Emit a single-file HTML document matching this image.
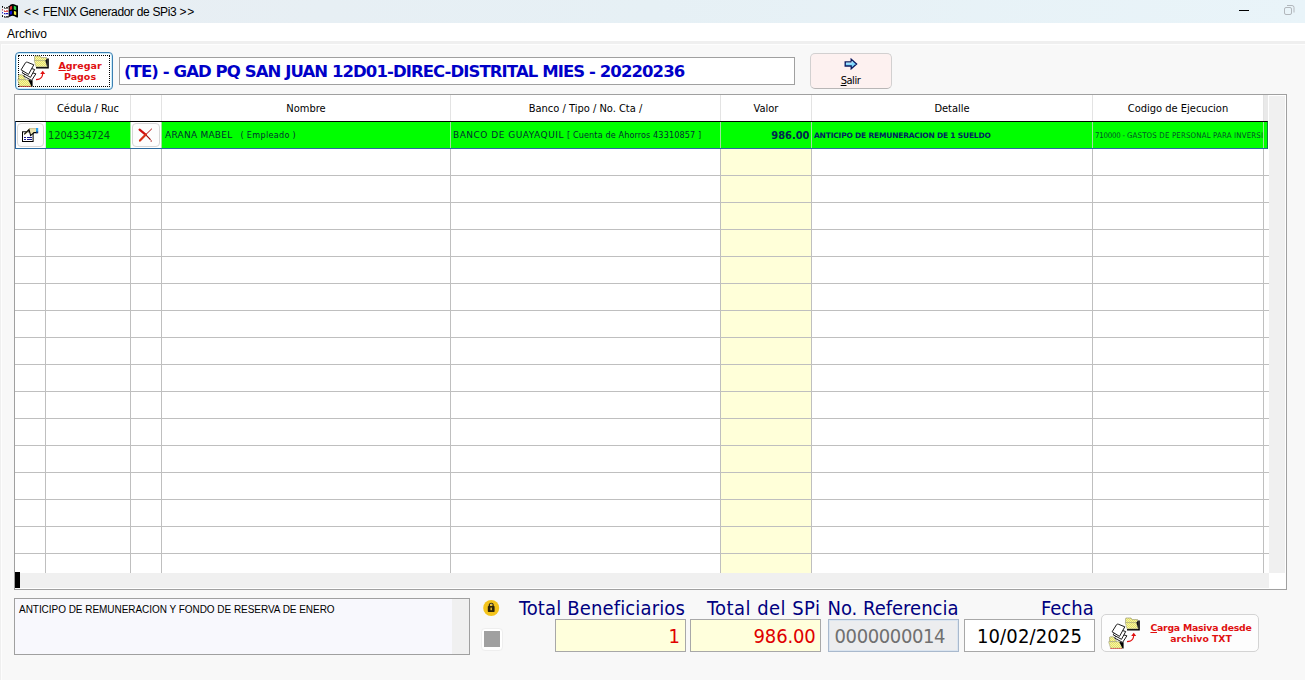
<!DOCTYPE html>
<html lang="es">
<head>
<meta charset="utf-8">
<title>FENIX Generador de SPi3</title>
<style>
*{box-sizing:border-box;margin:0;padding:0}
html,body{width:1305px;height:680px;overflow:hidden;background:#f8f8f8}
body{position:relative;font-family:"Liberation Sans",sans-serif;color:#000}
.abs{position:absolute}
.t{position:absolute;white-space:pre;line-height:1}
#titlebar{left:0;top:0;width:1305px;height:23px;background:linear-gradient(90deg,#e8eef3 0%,#e6f0f5 50%,#e9f4f9 100%)}
#menubar{left:0;top:23px;width:1305px;height:18px;background:#fff}
#sep1{left:0;top:41px;width:1305px;height:3px;background:#efefef}
#sep2{left:1px;top:44px;width:1304px;height:1px;background:#fdfdfd}
#lb1{left:0;top:41px;width:1px;height:639px;background:#efefef}
#lb2{left:1px;top:44px;width:1px;height:636px;background:#fdfdfd}
.tah{font-family:"DejaVu Sans Condensed","Liberation Sans",sans-serif}
.ver{font-family:"DejaVu Sans","Liberation Sans",sans-serif}
/* grid */
#grid{left:14px;top:94px;width:1273px;height:496px;background:#fff;border:1px solid #a0a0a0}
.vl{position:absolute;width:1px;background:#c0c0c0;top:95px;height:478px}
.hl{position:absolute;height:1px;background:#c0c0c0;left:15px;width:1254px}
.hd{position:absolute;top:102px;font-size:11px;white-space:pre;line-height:13px;text-align:center}
</style>
</head>
<body>
<div id="titlebar" class="abs"></div>
<div id="menubar" class="abs"></div>
<div id="sep1" class="abs"></div>
<div id="sep2" class="abs"></div>
<div id="lb1" class="abs"></div>
<div id="lb2" class="abs"></div>

<!-- app icon -->
<svg class="abs" style="left:0;top:0" width="22" height="22" viewBox="0 0 22 22">
  <path d="M8.1 6.6 Q9.6 6 10.6 4.6 Q12.8 3.4 14.8 4.4 Q16.4 5.4 18 5.4 V17.6 Q16.2 17.6 14.6 16.2 Q12.8 15.2 11.2 16 Q9.8 17 8.1 17 Z" fill="#000"/>
  <path d="M9.7 6.8 Q11 6.4 12.1 5.8 V9.2 Q11 9.8 9.7 10 Z" fill="#e02a2a"/>
  <path d="M13.8 5.8 Q15 6.2 16.2 6.8 V10.2 Q15 9.6 13.8 9.4 Z" fill="#2fd64a"/>
  <path d="M9.7 11.4 Q11 11.2 12.1 10.8 V14.2 Q11 14.6 9.7 14.8 Z" fill="#1010d8"/>
  <path d="M13.9 11 Q15 11.2 16.2 11.8 V15.2 Q15 14.6 13.9 14.4 Z" fill="#f4ee3a"/>
  <rect x="3.6" y="7" width="5" height="10.6" fill="#fff"/>
  <rect x="1.8" y="7.6" width="1.4" height="7.6" fill="#f4f6fa"/>
  <rect x="2" y="6" width="1" height="1.7" fill="#000"/>
  <rect x="2" y="9.2" width="1" height="1.3" fill="#b03030"/>
  <rect x="2" y="12.1" width="1" height="1.3" fill="#2020c0"/>
  <rect x="2" y="15.2" width="1" height="1.7" fill="#000"/>
  <path d="M4 7.2 H5 V8 H6 V7.2 H8.2 V8.5 H4 Z" fill="#000"/>
  <path d="M4 10.4 H5 V11 H6 V10.4 H8.2 V11.7 H4 Z" fill="#d01818"/>
  <path d="M4 13 H5 V13.6 H6 V13 H8.2 V14.3 H4 Z" fill="#1818b8"/>
  <path d="M4 16.2 H5 V16.8 H6 V16.2 H8.8 V17.6 H4 Z" fill="#000"/>
</svg>
<div class="t" style="left:24px;top:6px;font-size:12px;letter-spacing:-0.34px"><span style="letter-spacing:0.9px">&lt;&lt;</span> FENIX Generador de SPi3 <span style="letter-spacing:0.9px">&gt;&gt;</span></div>
<div class="t" style="left:7px;top:28px;font-size:12px">Archivo</div>

<!-- window controls -->
<div class="abs" style="left:1239px;top:10px;width:10px;height:1px;background:#000"></div>
<svg class="abs" style="left:1283px;top:4px" width="13" height="13" viewBox="0 0 13 13" fill="none" stroke="#b2b7bc" stroke-width="1">
  <rect x="1.5" y="3.5" width="7" height="7" rx="1.5"/>
  <path d="M4 1.5 H9 Q11 1.5 11 3.5 V8.5"/>
</svg>

<!-- Agregar Pagos button -->
<div class="abs" style="left:15px;top:52px;width:98px;height:38px;border:1px solid #3c7fb1;border-radius:4px;background:#fff;box-shadow:inset 0 0 0 1px #c9ecfa"></div>
<div class="abs" style="left:18px;top:55px;width:92px;height:32px;border:1px dotted #000"></div>
<div class="t ver" style="left:50px;top:60px;width:60px;text-align:center;font-size:9.5px;font-weight:bold;color:#e01010;line-height:11px"><u>A</u>gregar
Pagos</div>

<svg class="abs" style="left:17px;top:55px" width="32" height="32" viewBox="0 0 32 32">
  <defs><pattern id="dithA" width="2" height="2" patternUnits="userSpaceOnUse"><rect width="2" height="2" fill="#e6e264"/><rect width="1" height="1" fill="#f6f4a8"/><rect x="1" y="1" width="1" height="1" fill="#f6f4a8"/></pattern></defs>
  <!-- top folder -->
  <path d="M19 13.5 H31.8 V3.5 H30.2 V11.8 H19 Z" fill="#000"/>
  <path d="M17.6 3 V1.6 Q17.6 1 18.3 1 H23 L24.2 2.6 H29.6 V6 H17.6 Z" fill="url(#dithA)" stroke="#8a8a6a" stroke-width="0.6"/>
  <path d="M17.2 5.6 H28.4 L30.2 11.8 H19 Z" fill="url(#dithA)" stroke="#9a9a80" stroke-width="0.5"/>
  <path d="M28.4 5.6 L30.2 11.8 V3.6 Z" fill="#111"/>
  <!-- papers -->
  <path d="M11 16.5 L18.9 18.8 L14.6 25.4 L6.3 20.9 Z" fill="#fff" stroke="#000" stroke-width="0.9" stroke-linejoin="round"/>
  <path d="M9.6 12 L17.7 14.5 L13.5 22.3 L5.2 17.8 Z" fill="#fff" stroke="#000" stroke-width="0.9" stroke-linejoin="round"/>
  <path d="M8.5 7.7 Q9.5 6.8 10.6 7.3 L16.8 9.8 L11.5 19.4 L4.1 14.8 Z" fill="#fff" stroke="#000" stroke-width="0.9" stroke-linejoin="round"/>
  <!-- bottom folder -->
  <path d="M1.6 24.8 V20.6 Q1.6 19.8 2.4 19.8 H5.4 L6.6 21.6 L9 24.8 Z" fill="url(#dithA)" stroke="#8a8a6a" stroke-width="0.6"/>
  <path d="M0.6 24.7 H11.2 L14.6 31.2 H2.6 Z" fill="url(#dithA)" stroke="#9a9a80" stroke-width="0.5"/>
  <path d="M11.2 24.7 L14.6 31.4 H15.6 V25 L14.6 25.4 Z" fill="#000"/>
  <path d="M2.6 31.5 H14" stroke="#d01010" stroke-width="1" stroke-dasharray="1 1"/>
  <!-- arrow -->
  <path d="M19 24.6 Q23.2 24.4 24.6 22.2 Q25.6 20.6 25.7 18.6" fill="none" stroke="#e01010" stroke-width="1.1"/>
  <path d="M23.2 19 L25.7 15.8 L28.2 19 Z" fill="#e01010"/>
</svg>
<!-- title textbox -->
<div class="abs" style="left:119px;top:57px;width:676px;height:28px;border:1px solid #a0a0a0;background:#fff"></div>
<div class="t ver" style="left:124px;top:63.5px;font-size:16.5px;font-weight:bold;color:#0000c8;letter-spacing:-0.92px">(TE) - GAD PQ SAN JUAN 12D01-DIREC-DISTRITAL MIES - 20220236</div>

<!-- Salir button -->
<div class="abs" style="left:810px;top:53px;width:82px;height:36px;border:1px solid #d2d0d0;border-bottom-color:#b8b6b6;border-radius:5px;background:#fdf1f0"></div>
<div class="t tah" style="left:809.5px;top:74.6px;width:82px;text-align:center;font-size:11px;letter-spacing:-0.45px"><u>S</u>alir</div>

<svg class="abs" style="left:844px;top:58px" width="14" height="12" viewBox="0 0 14 12">
  <path d="M1.2 4 H7.2 V1.2 L12.6 6 L7.2 10.8 V8 H1.2 Z" fill="#7fd8ff" stroke="#0a1a60" stroke-width="1.3" stroke-linejoin="miter"/>
  <path d="M2 5 H8 V3.2" fill="none" stroke="#d8f4ff" stroke-width="0.8"/>
</svg>
<!-- grid -->
<div id="grid" class="abs"></div>

<div class="abs" style="left:1264px;top:95px;width:4px;height:26px;background:#e9e9e9"></div>
<div class="abs" style="left:721px;top:149px;width:90px;height:424px;background:#ffffd9"></div>
<div class="abs" style="left:45px;top:95px;width:1px;height:26px;background:#e3e3e3"></div>
<div class="abs" style="left:45px;top:149px;width:1px;height:424px;background:#bfbfbf"></div>
<div class="abs" style="left:130px;top:95px;width:1px;height:26px;background:#e3e3e3"></div>
<div class="abs" style="left:130px;top:149px;width:1px;height:424px;background:#bfbfbf"></div>
<div class="abs" style="left:161px;top:95px;width:1px;height:26px;background:#e3e3e3"></div>
<div class="abs" style="left:161px;top:149px;width:1px;height:424px;background:#bfbfbf"></div>
<div class="abs" style="left:450px;top:95px;width:1px;height:26px;background:#e3e3e3"></div>
<div class="abs" style="left:450px;top:149px;width:1px;height:424px;background:#bfbfbf"></div>
<div class="abs" style="left:720px;top:95px;width:1px;height:26px;background:#e3e3e3"></div>
<div class="abs" style="left:720px;top:149px;width:1px;height:424px;background:#bfbfbf"></div>
<div class="abs" style="left:811px;top:95px;width:1px;height:26px;background:#e3e3e3"></div>
<div class="abs" style="left:811px;top:149px;width:1px;height:424px;background:#bfbfbf"></div>
<div class="abs" style="left:1092px;top:95px;width:1px;height:26px;background:#e3e3e3"></div>
<div class="abs" style="left:1092px;top:149px;width:1px;height:424px;background:#bfbfbf"></div>
<div class="abs" style="left:1263px;top:95px;width:1px;height:26px;background:#e3e3e3"></div>
<div class="abs" style="left:1263px;top:149px;width:1px;height:424px;background:#bfbfbf"></div>
<div class="abs" style="left:15px;top:175px;width:1254px;height:1px;background:#bfbfbf"></div>
<div class="abs" style="left:15px;top:202px;width:1254px;height:1px;background:#bfbfbf"></div>
<div class="abs" style="left:15px;top:229px;width:1254px;height:1px;background:#bfbfbf"></div>
<div class="abs" style="left:15px;top:256px;width:1254px;height:1px;background:#bfbfbf"></div>
<div class="abs" style="left:15px;top:283px;width:1254px;height:1px;background:#bfbfbf"></div>
<div class="abs" style="left:15px;top:310px;width:1254px;height:1px;background:#bfbfbf"></div>
<div class="abs" style="left:15px;top:337px;width:1254px;height:1px;background:#bfbfbf"></div>
<div class="abs" style="left:15px;top:364px;width:1254px;height:1px;background:#bfbfbf"></div>
<div class="abs" style="left:15px;top:391px;width:1254px;height:1px;background:#bfbfbf"></div>
<div class="abs" style="left:15px;top:418px;width:1254px;height:1px;background:#bfbfbf"></div>
<div class="abs" style="left:15px;top:445px;width:1254px;height:1px;background:#bfbfbf"></div>
<div class="abs" style="left:15px;top:472px;width:1254px;height:1px;background:#bfbfbf"></div>
<div class="abs" style="left:15px;top:499px;width:1254px;height:1px;background:#bfbfbf"></div>
<div class="abs" style="left:15px;top:526px;width:1254px;height:1px;background:#bfbfbf"></div>
<div class="abs" style="left:15px;top:553px;width:1254px;height:1px;background:#bfbfbf"></div>
<div class="abs" style="left:1269px;top:96px;width:16px;height:477px;background:#f0f0f0"></div>
<div class="abs" style="left:15px;top:573px;width:1254px;height:15px;background:#f0f0f0"></div>
<div class="abs" style="left:15px;top:572px;width:5px;height:16px;background:#000"></div>
<div class="abs" style="left:15px;top:121px;width:1253px;height:28px;background:#00ff00;border-top:1px solid #000;border-left:1px solid #2a62a0;border-bottom:1px solid #2a6aa0;border-right:1px solid #108040"></div>
<div class="abs" style="left:16px;top:122px;width:30px;height:26px;background:#fff"></div>
<div class="abs" style="left:131px;top:122px;width:31px;height:26px;background:#fff"></div>
<div class="abs" style="left:130px;top:122px;width:1px;height:26px;background:#9ce49c"></div>
<div class="abs" style="left:161px;top:122px;width:1px;height:26px;background:#9ce49c"></div>
<div class="abs" style="left:450px;top:122px;width:1px;height:26px;background:#9ce49c"></div>
<div class="abs" style="left:720px;top:122px;width:1px;height:26px;background:#9ce49c"></div>
<div class="abs" style="left:811px;top:122px;width:1px;height:26px;background:#9ce49c"></div>
<div class="abs" style="left:1092px;top:122px;width:1px;height:26px;background:#9ce49c"></div>
<div class="abs" style="left:1263px;top:122px;width:1px;height:26px;background:#9ce49c"></div>
<div class="abs" style="left:45px;top:122px;width:1px;height:26px;background:#d8e4f0"></div>
<div class="abs" style="left:17px;top:123px;width:27px;height:24px;background:#fdfdfd;border:1px solid #d6d6d6;border-radius:4px"></div>
<div class="abs" style="left:132px;top:123px;width:28px;height:24px;background:#fdfdfd;border:1px solid #d6d6d6;border-radius:4px"></div>
<svg class="abs" style="left:21px;top:127px" width="18" height="16" viewBox="0 0 18 16">
  <rect x="1.5" y="4.8" width="10.6" height="9.7" fill="#fff" stroke="#000" stroke-width="1"/>
  <rect x="3" y="10" width="2" height="1" fill="#1a1a90"/><rect x="6" y="10" width="5" height="1" fill="#1a1a90"/>
  <rect x="3" y="12" width="2" height="1" fill="#1a1a90"/><rect x="6" y="12" width="5" height="1" fill="#1a1a90"/>
  <path d="M3 7.2 L8 1.4 H15 V5.4 L13 5.4 L9.6 8.6 L8 3.6 L5 7.6 Z" fill="#ece4b0"/>
  <path d="M8 1.6 H15" stroke="#cfc490" stroke-width="1"/>
  <path d="M3.2 7.4 L8 2.6 L9.6 8.6 L13 5.6 L16.6 5.6" fill="none" stroke="#000" stroke-width="1.1"/>
  <rect x="15" y="1" width="2.2" height="4" fill="#2aa0f0"/>
  <rect x="15" y="4.6" width="2.2" height="1.6" fill="#103080"/>
</svg>
<svg class="abs" style="left:138px;top:128px" width="16" height="15" viewBox="0 0 16 15">
  <path d="M1.6 1.6 L7.6 6.6" stroke="#d01010" stroke-width="2.2" stroke-linecap="round"/>
  <path d="M7.6 6.6 L12.2 11.4" stroke="#a00c0c" stroke-width="1.2" stroke-linecap="round"/>
  <path d="M13.6 1 L7.8 6.6" stroke="#b01010" stroke-width="1" stroke-linecap="round"/>
  <path d="M7.8 6.6 L2 12.6" stroke="#d83018" stroke-width="2.2" stroke-linecap="round"/>
  <rect x="12.6" y="12.4" width="1.2" height="1.2" fill="#a01010"/>
</svg>
<div class="hd tah" style="left:46px;width:84px">Cédula / Ruc</div>
<div class="hd tah" style="left:162px;width:288px">Nombre</div>
<div class="hd tah" style="left:451px;width:269px">Banco / Tipo / No. Cta /</div>
<div class="hd tah" style="left:721px;width:90px">Valor</div>
<div class="hd tah" style="left:812px;width:280px">Detalle</div>
<div class="hd tah" style="left:1093px;width:170px">Codigo de Ejecucion</div>
<div class="t tah" style="left:48px;top:130px;font-size:11px;color:#00521c;letter-spacing:-0.1px">1204334724</div>
<div class="t ver" style="left:165px;top:131px;font-size:9px;color:#003030;letter-spacing:0.24px">ARANA MABEL</div>
<div class="t tah" style="left:240.5px;top:131px;font-size:9px;color:#003030;letter-spacing:0.3px">( Empleado )</div>
<div class="t ver" style="left:453px;top:131px;font-size:9px;color:#003030;letter-spacing:0.5px">BANCO DE GUAYAQUIL</div>
<div class="t tah" style="left:567px;top:131px;font-size:9px;color:#003030;letter-spacing:0.12px">[ Cuenta de Ahorros 43310857 ]</div>
<div class="t tah" style="left:721px;width:88.5px;text-align:right;top:130px;font-size:11px;font-weight:bold;color:#002850">986.00</div>
<div class="t ver" style="left:814px;top:132px;font-size:7.5px;font-weight:bold;color:#002460;letter-spacing:-0.19px">ANTICIPO DE REMUNERACION DE 1 SUELDO</div>
<div class="t tah" style="left:1095px;top:132px;font-size:7.8px;color:#005028;width:168px;overflow:hidden;letter-spacing:0.17px"><span style="letter-spacing:-0.2px">710000 - </span>GASTOS DE PERSONAL PARA INVERSI</div>
<div class="abs" style="left:14px;top:598px;width:456px;height:57px;background:#f8f8fd;border:1px solid #a0a0a0"></div>
<div class="abs" style="left:452px;top:599px;width:17px;height:55px;background:#f0f0f0"></div>
<div class="t" style="left:19px;top:605px;font-size:10px;letter-spacing:-0.04px;color:#000">ANTICIPO DE REMUNERACION Y FONDO DE RESERVA DE ENERO</div>
<svg class="abs" style="left:483px;top:600px" width="17" height="17" viewBox="0 0 17 17"><circle cx="8.2" cy="8" r="8" fill="#f4c41c"/><rect x="4.8" y="6" width="6.8" height="6" rx="0.7" fill="#2e2408"/><path d="M6.3 6.4 V5.4 A1.9 1.9 0 0 1 10.1 5.4 V6.4" fill="none" stroke="#2e2408" stroke-width="1.3"/><rect x="7.5" y="7.6" width="1.4" height="2.6" fill="#e8c040"/><path d="M6.9 4.6 Q8.2 3.6 9.5 4.6" stroke="#fff6d0" stroke-width="0.7" fill="none"/></svg>
<div class="abs" style="left:481px;top:628px;width:22px;height:23px;background:#fff;border:1px solid #eeeeee;border-radius:4px"></div>
<div class="abs" style="left:484px;top:631px;width:16px;height:16px;background:#a0a0a0"></div>
<div class="t tah" style="left:519px;top:598px;font-size:20px;color:#000080;letter-spacing:0.14px">Total Beneficiarios</div>
<div class="t tah" style="left:707px;top:598px;font-size:20px;color:#000080;letter-spacing:0.46px">Total del SPi</div>
<div class="t tah" style="left:827.5px;top:598px;font-size:20px;color:#000080">No. Referencia</div>
<div class="t tah" style="left:1041px;top:598px;font-size:20px;color:#000080">Fecha</div>
<div class="abs" style="left:555px;top:619px;width:131px;height:33px;background:#ffffdc;border:1px solid #a8a8a8"></div>
<div class="abs" style="left:690px;top:619px;width:131px;height:33px;background:#ffffdc;border:1px solid #a8a8a8"></div>
<div class="abs" style="left:828px;top:619px;width:131px;height:33px;background:#ecedef;border:1px solid #a9b9cd;box-shadow:inset 0 0 0 1px #dbe5f0"></div>
<div class="abs" style="left:964px;top:619px;width:131px;height:33px;background:#fff;border:1px solid #a8a8a8"></div>
<div class="t tah" style="left:556px;width:124px;text-align:right;top:626px;font-size:20px;color:#e00000">1</div>
<div class="t tah" style="left:691px;width:124.6px;text-align:right;top:626px;font-size:20px;color:#e00000;letter-spacing:-0.15px">986.00</div>
<div class="t tah" style="left:834.5px;top:626px;font-size:20px;color:#707070;letter-spacing:-0.38px">0000000014</div>
<div class="t tah" style="left:964px;width:131px;text-align:center;top:626px;font-size:20px;color:#000;letter-spacing:0.15px">10/02/2025</div>
<div class="abs" style="left:1101px;top:614px;width:158px;height:38px;background:#fdfdfd;border:1px solid #d4d4d4;border-radius:5px"></div>
<div class="t ver" style="left:1146px;top:621.5px;width:110px;text-align:center;font-size:9.3px;font-weight:bold;color:#e01010;line-height:11px"><span style="letter-spacing:-0.22px"><u>C</u>arga Masiva desde</span>
archivo TXT</div>
<svg class="abs" style="left:1108px;top:617px" width="32" height="32" viewBox="0 0 32 32">
  <defs><pattern id="dithB" width="2" height="2" patternUnits="userSpaceOnUse"><rect width="2" height="2" fill="#e6e264"/><rect width="1" height="1" fill="#f6f4a8"/><rect x="1" y="1" width="1" height="1" fill="#f6f4a8"/></pattern></defs>
  <!-- top folder -->
  <path d="M19 13.5 H31.8 V3.5 H30.2 V11.8 H19 Z" fill="#000"/>
  <path d="M17.6 3 V1.6 Q17.6 1 18.3 1 H23 L24.2 2.6 H29.6 V6 H17.6 Z" fill="url(#dithB)" stroke="#8a8a6a" stroke-width="0.6"/>
  <path d="M17.2 5.6 H28.4 L30.2 11.8 H19 Z" fill="url(#dithB)" stroke="#9a9a80" stroke-width="0.5"/>
  <path d="M28.4 5.6 L30.2 11.8 V3.6 Z" fill="#111"/>
  <!-- papers -->
  <path d="M11 16.5 L18.9 18.8 L14.6 25.4 L6.3 20.9 Z" fill="#fff" stroke="#000" stroke-width="0.9" stroke-linejoin="round"/>
  <path d="M9.6 12 L17.7 14.5 L13.5 22.3 L5.2 17.8 Z" fill="#fff" stroke="#000" stroke-width="0.9" stroke-linejoin="round"/>
  <path d="M8.5 7.7 Q9.5 6.8 10.6 7.3 L16.8 9.8 L11.5 19.4 L4.1 14.8 Z" fill="#fff" stroke="#000" stroke-width="0.9" stroke-linejoin="round"/>
  <!-- bottom folder -->
  <path d="M1.6 24.8 V20.6 Q1.6 19.8 2.4 19.8 H5.4 L6.6 21.6 L9 24.8 Z" fill="url(#dithB)" stroke="#8a8a6a" stroke-width="0.6"/>
  <path d="M0.6 24.7 H11.2 L14.6 31.2 H2.6 Z" fill="url(#dithB)" stroke="#9a9a80" stroke-width="0.5"/>
  <path d="M11.2 24.7 L14.6 31.4 H15.6 V25 L14.6 25.4 Z" fill="#000"/>
  <path d="M2.6 31.5 H14" stroke="#d01010" stroke-width="1" stroke-dasharray="1 1"/>
  <!-- arrow -->
  <path d="M19 24.6 Q23.2 24.4 24.6 22.2 Q25.6 20.6 25.7 18.6" fill="none" stroke="#e01010" stroke-width="1.1"/>
  <path d="M23.2 19 L25.7 15.8 L28.2 19 Z" fill="#e01010"/>
</svg>
</body>
</html>
